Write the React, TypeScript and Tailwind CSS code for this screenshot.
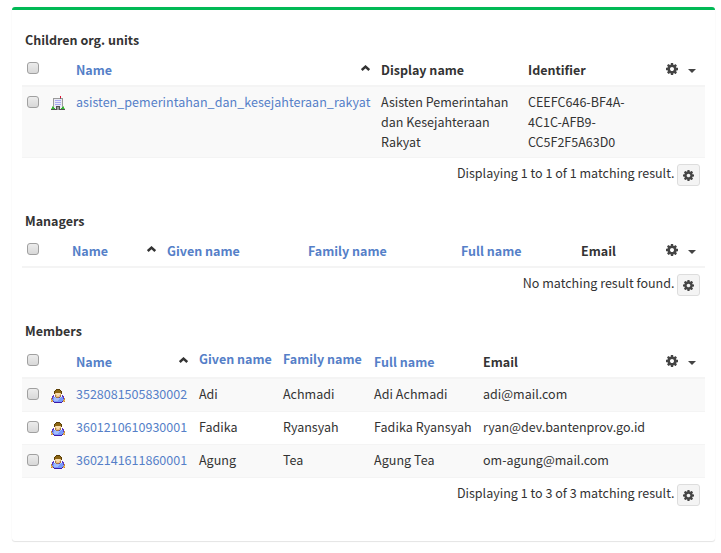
import React from "react";

const COG =
  "M1152 896q0-106-75-181t-181-75-181 75-75 181 75 181 181 75 181-75 75-181zm512-109v222q0 12-8 23t-20 13l-185 28q-19 54-39 91 35 50 107 138 10 12 10 25t-9 23q-27 37-99 108t-94 71q-12 0-26-9l-138-108q-44 23-91 38-16 136-29 186-7 28-36 28h-222q-14 0-24.500-8.500t-11.500-21.500l-28-184q-49-16-90-37l-141 107q-10 9-25 9-14 0-25-11-126-114-165-168-7-10-7-23 0-12 8-23 15-21 51-66.500t54-70.500q-27-50-41-99l-183-27q-13-2-21-12.500t-8-23.500v-222q0-12 8-23t19-13l186-28q14-46 39-92-40-57-107-138-10-12-10-24 0-10 9-23 26-36 98.500-107.500t94.500-71.500q13 0 26 10l138 107q44-23 91-38 16-136 29-186 7-28 36-28h222q14 0 24.500 8.500t11.500 21.500l28 184q49 16 90 37l142-107q9-9 24-9 13 0 25 10 129 119 165 170 7 8 7 22 0 12-8 23-15 21-51 66.500t-54 70.500q26 50 41 98l183 28q13 2 21 12.500t8 23.500z";

function Cog({ className }: { className: string }) {
  return (
    <svg viewBox="128 128 1536 1536" className={className} fill="#444">
      <path d={COG} />
    </svg>
  );
}

const PALETTE: Record<string, string> = {
  b: "#5c3f05", B: "#8a6412", s: "#e9bd85", S: "#f8dcae", d: "#a57a45",
  p: "#5a35c0", P: "#3f1aa8", l: "#a3bbff", L: "#7799fa", o: "#c98a32",
  y: "#f0c070", g: "#9a9a9a", G: "#6a6a6a", w: "#e9e9f4", v: "#a9a9f2",
  r: "#e01030", n: "#35b535", N: "#8fe080", k: "#505050",
};

const USER = [
  ".....bbbb.....",
  "....bBBBBb....",
  "...bBBBBBBb...",
  "...bBBBBBBb...",
  "...bsSSSSsb...",
  "....sSSSSs....",
  "..p.dsSSsd.p..",
  ".pp.dssssd.pp.",
  ".pLLldddplLLp.",
  "opLllllllLLLpo",
  "oLLlllllLLLLLo",
  "yoLllllLLLLLoy",
  "oyPLLLLLLLLPyo",
  "...PPPPPPPP...",
];

const BUILDING = [
  ".........r....",
  ".........r....",
  "..gggggggGgg..",
  "..gwwwwwwwwg..",
  "..gwvvvvvvwg..",
  "..gwwwwwwwwg..",
  "..gwvvvvvvwg..",
  "..gwwwwwwwwg..",
  "..gwvvvvvvwg..",
  "..gwwwwwwwwg..",
  ".NgwwkkkkwwgN.",
  ".nnwwkggkwwnn.",
  "NnnnwkggkwnnnN",
  "kkkkkkggkkkkkk",
];

function Sprite({ rows }: { rows: string[] }) {
  return (
    <svg viewBox="0 0 14 14" className="block h-3.5 w-3.5" shapeRendering="crispEdges">
      {rows.flatMap((row, y) =>
        row.split("").map((c, x) =>
          c === "." ? null : <rect key={`${x}-${y}`} x={x} y={y} width="1" height="1" fill={PALETTE[c]} />
        )
      )}
    </svg>
  );
}

function Check() {
  return (
    <span
      role="checkbox"
      aria-checked="false"
      className="block h-3 w-3 rounded-[3px] border border-[#a0a0a0] bg-linear-to-b from-[#ececec] to-[#d8d8d8]"
    />
  );
}

function SortArrow({ className }: { className: string }) {
  return (
    <svg viewBox="0 0 9 6" className={`h-1.5 w-[9px] shrink-0 ${className}`}>
      <path d="M.8 5 4.500 1.600 8.200 5" fill="none" stroke="#333" strokeWidth="2.4" />
    </svg>
  );
}

const link = "text-[#557fc8]";

function Title({ children, className }: { children: string; className: string }) {
  return <h3 className={`pl-[3px] font-bold ${className}`}>{children}</h3>;
}

function Actions({ className = "" }: { className?: string }) {
  return (
    <div className={`flex items-start ${className}`}>
      <Cog className="mt-[3px] h-3 w-3" />
      <svg viewBox="0 0 8 4" className="mt-[9px] ml-2.5 h-1 w-2">
        <path d="M0 0h8L4 4z" fill="#444" />
      </svg>
    </div>
  );
}

function Footer({ children }: { children: string }) {
  return (
    <div className="flex justify-end pt-1.5 pr-[5px]">
      <span className="-mt-px mr-[2.500px] tracking-[0.01px]">{children}</span>
      <button className="flex h-[22px] w-[23px] items-center justify-center rounded-[3px] border border-[#ddd] bg-[#f4f4f4]">
        <Cog className="h-[11px] w-[11px]" />
      </button>
    </div>
  );
}

const members = [
  ["3528081505830002", "Adi", "Achmadi", "Adi Achmadi", "adi@mail.com"],
  ["3601210610930001", "Fadika", "Ryansyah", "Fadika Ryansyah", "ryan@dev.bantenprov.go.id"],
  ["3602141611860001", "Agung", "Tea", "Agung Tea", "om-agung@mail.com"],
];

const childCols = "grid grid-cols-[24px_25px_305px_147px_138px_39px] pl-[5px]";
const managerCols = "grid grid-cols-[45px_95px_141px_153px_120px_85px_39px] pl-[5px]";
const memberCols = "grid grid-cols-[24px_25px_123px_84px_91px_109px_183px_39px] pl-[5px]";

export default function App() {
  return (
    <div className="h-[553px] w-[721px] bg-white pt-[7px] pl-3 font-['Noto_Sans_CJK_SC',sans-serif] text-[12.53px] leading-5 whitespace-nowrap text-[#333]">
      <main className="h-[534px] w-[703px] rounded-[3px] border-t-[3px] border-[#00b955] bg-white px-2.5 shadow-[0_1px_1px_rgba(0,0,0,0.1),0_0_1px_rgba(0,0,0,0.08)]">
        <section className="h-[181px] pt-5">
          <Title className="mb-2.5">Children org. units</Title>
          <div className={`h-[27px] border-b-2 border-[#f4f4f4] font-bold ${childCols}`}>
            <div className="pt-0.5"><Check /></div>
            <div />
            <div className={`flex ${link}`}>Name<SortArrow className="mt-[5px] mr-[11px] ml-auto" /></div>
            <div>Display name</div>
            <div>Identifier</div>
            <Actions />
          </div>
          <div className={`h-[71px] border-b border-[#f4f4f4] bg-[#f9f9f9] pt-[5px] ${childCols}`}>
            <div className="pt-1"><Check /></div>
            <div className="pt-1"><Sprite rows={BUILDING} /></div>
            <a className={`tracking-[0.035px] ${link}`}>asisten_pemerintahan_dan_kesejahteraan_rakyat</a>
            <div>Asisten Pemerintahan<br />dan Kesejahteraan<br />Rakyat</div>
            <div>CEEFC646-BF4A-<br />4C1C-AFB9-<br />CC5F2F5A63D0</div>
          </div>
          <Footer>Displaying 1 to 1 of 1 matching result.</Footer>
        </section>

        <section className="h-[110px] pt-5">
          <Title className="mb-2.5">Managers</Title>
          <div className={`h-[27px] border-b-2 border-[#f4f4f4] font-bold ${managerCols}`}>
            <div className="pt-0.5"><Check /></div>
            <div className={`flex ${link}`}>Name<SortArrow className="mt-[5px] mr-[11px] ml-auto" /></div>
            <div className={link}>Given name</div>
            <div className={link}>Family name</div>
            <div className={link}>Full name</div>
            <div>Email</div>
            <Actions />
          </div>
          <Footer>No matching result found.</Footer>
        </section>

        <section className="pt-5">
          <Title className="mb-2">Members</Title>
          <div className={`h-[30px] border-b-2 border-[#f4f4f4] font-bold ${memberCols}`}>
            <div className="pt-[5px]"><Check /></div>
            <div />
            <div className={`flex pt-[3px] ${link}`}>Name<SortArrow className="mt-[5px] mr-[11px] ml-auto" /></div>
            <div className={link}>Given name</div>
            <div className={link}>Family name</div>
            <div className={`pt-[3px] ${link}`}>Full name</div>
            <div className="pt-[3px]">Email</div>
            <Actions className="pt-[3px]" />
          </div>
          {members.map(([id, given, family, full, email], i) => (
            <div
              key={id}
              className={`h-[33px] border-b border-[#f4f4f4] pt-[5px] ${memberCols} ${i % 2 ? "bg-white" : "bg-[#f9f9f9]"}`}
            >
              <div className="pt-1"><Check /></div>
              <div className="pt-[5px]"><Sprite rows={USER} /></div>
              <a className={link}>{id}</a>
              <div>{given}</div>
              <div>{family}</div>
              <div className="tracking-[0.05px]">{full}</div>
              <div>{email}</div>
            </div>
          ))}
          <Footer>Displaying 1 to 3 of 3 matching result.</Footer>
        </section>
      </main>
    </div>
  );
}
